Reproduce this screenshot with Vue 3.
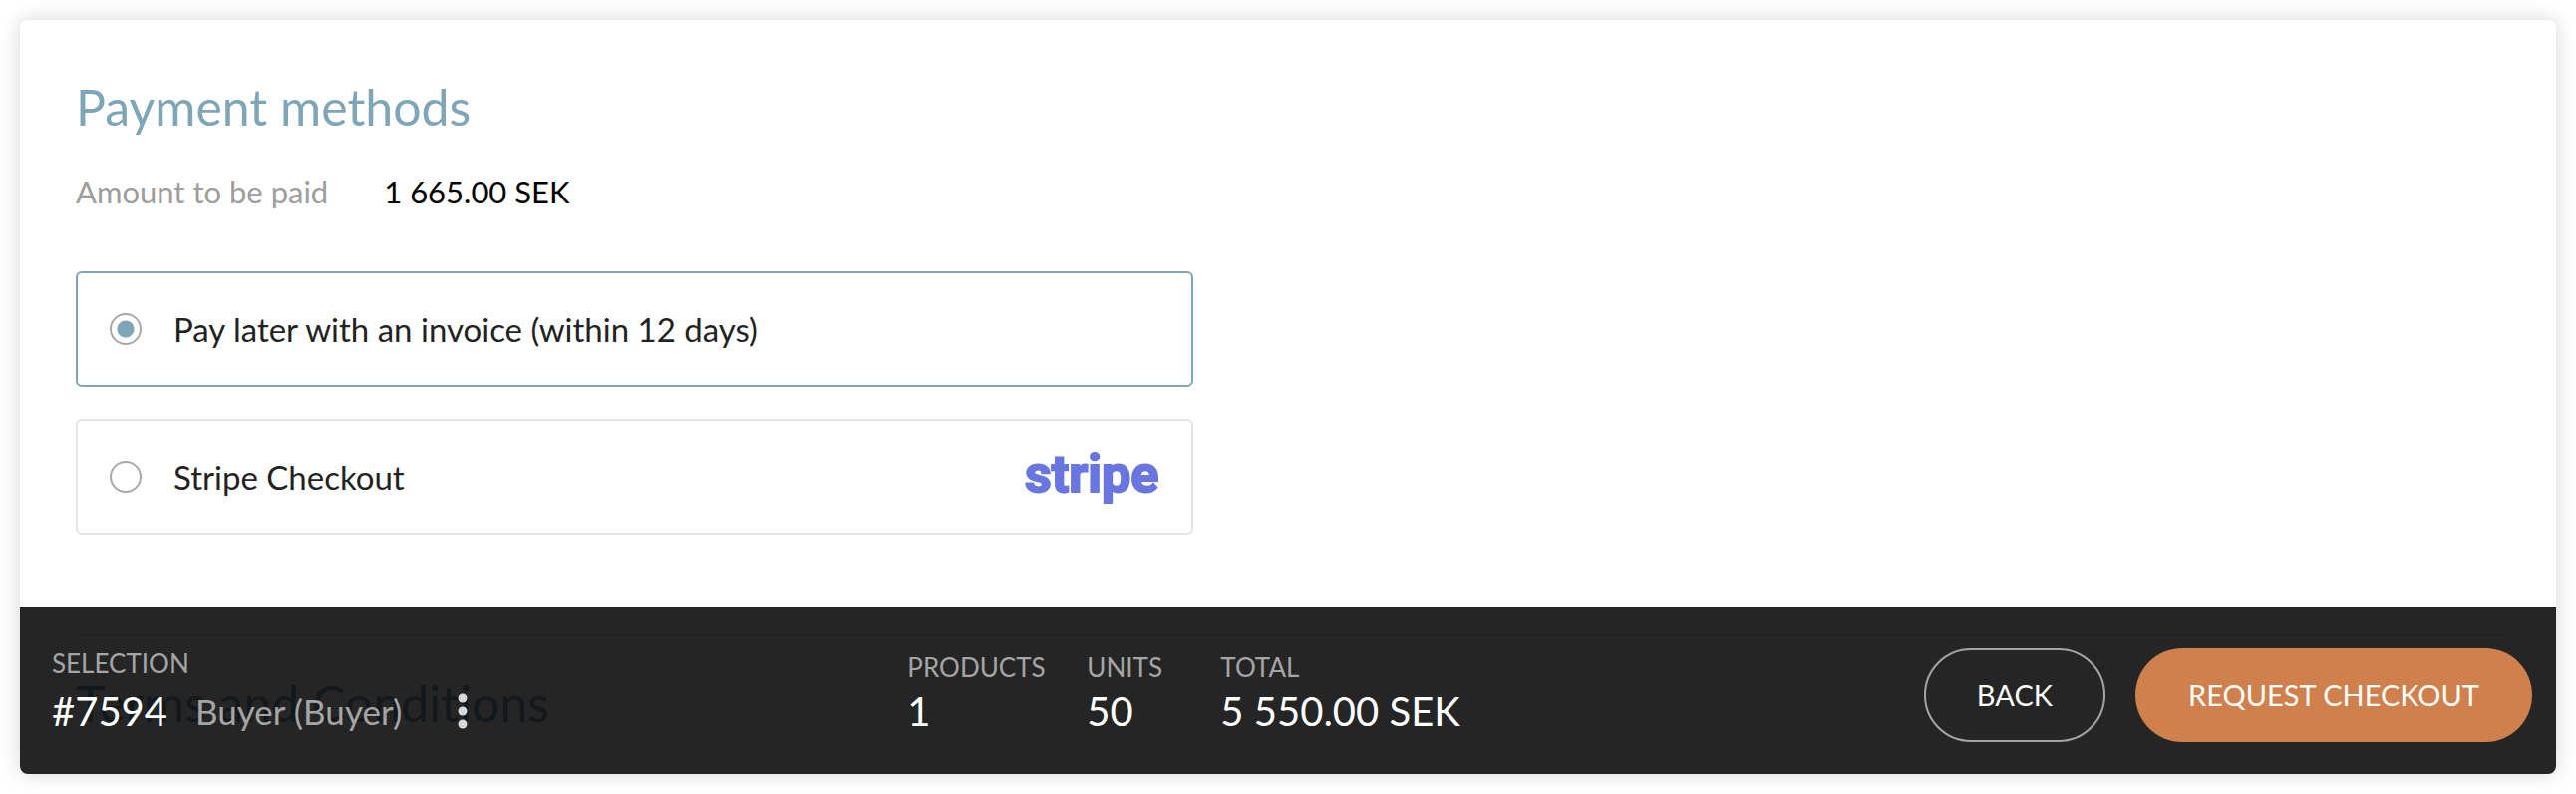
<script setup>
import { ref } from 'vue'

const method = ref('invoice')
const methods = [
  { id: 'invoice', label: 'Pay later with an invoice (within 12 days)' },
  { id: 'stripe', label: 'Stripe Checkout' },
]
const totals = [
  { label: 'Products', value: '1' },
  { label: 'Units', value: '50' },
  { label: 'Total', value: '5 550.00 SEK' },
]
</script>

<template>
  <main class="page">
    <div class="card">
      <section class="payment">
        <h2 class="title">Payment methods</h2>
        <dl class="amount">
          <dt>Amount to be paid</dt>
          <dd>1 665.00 SEK</dd>
        </dl>
        <div class="options" role="radiogroup" aria-label="Payment methods">
          <label
            v-for="m in methods"
            :key="m.id"
            class="option"
            :class="{ selected: method === m.id }"
          >
            <input v-model="method" class="radio" type="radio" name="method" :value="m.id" />
            <span class="option-label">{{ m.label }}</span>
            <svg v-if="m.id === 'stripe'" class="logo" viewBox="0 0 136 68" aria-label="Stripe">
              <text x="1" y="49">stripe</text>
            </svg>
          </label>
        </div>
      </section>
      <section class="terms">
        <h2 class="title">Terms and Conditions</h2>
      </section>

      <footer class="bar">
        <div class="selection">
          <div class="caption">Selection</div>
          <div class="selection-row">
            <span class="value">#7594</span>
            <span class="buyer">Buyer (Buyer)</span>
            <button class="more" type="button" aria-label="More actions">
              <svg viewBox="0 0 10 36">
                <circle cx="5" cy="5" r="4.5" />
                <circle cx="5" cy="18" r="4.5" />
                <circle cx="5" cy="31" r="4.5" />
              </svg>
            </button>
          </div>
        </div>
        <dl class="totals">
          <div v-for="t in totals" :key="t.label" class="total">
            <dt class="caption">{{ t.label }}</dt>
            <dd class="value">{{ t.value }}</dd>
          </div>
        </dl>
        <div class="actions">
          <button class="btn outline" type="button">BACK</button>
          <button class="btn primary" type="button">REQUEST CHECKOUT</button>
        </div>
      </footer>
    </div>
  </main>
</template>

<style>
body {
  margin: 0;
  background: #fff;
}
</style>

<style scoped>
.page {
  box-sizing: border-box;
  min-height: 100vh;
  padding: 20px;
  display: flex;
  font-family: Lato, "Open Sans", sans-serif;
  color: #222;
}
.card {
  position: relative;
  flex: 1;
  border-radius: 8px;
  overflow: hidden;
  background: #fff;
  box-shadow: 0 0 20px rgba(0, 0, 0, 0.16);
}
.payment {
  padding: 60px 56px 100px;
}
.title {
  margin: 0;
  font-size: 50px;
  line-height: 54px;
  font-weight: 400;
  color: #7fa6b6;
}
.amount {
  display: flex;
  gap: 56px;
  margin: 38px 0 60px;
  font-size: 31px;
  line-height: 40px;
}
.amount dt {
  color: #9d9d9d;
}
.amount dd {
  margin: 0;
  color: #000;
}
.options {
  display: grid;
  gap: 32px;
  width: 46.1%;
}
.option {
  box-sizing: border-box;
  min-height: 116px;
  padding: 0 32px;
  display: flex;
  align-items: center;
  gap: 32px;
  border: 2px solid #e5e5e5;
  border-radius: 6px;
  font-size: 33px;
  line-height: 40px;
  cursor: pointer;
}
.option.selected {
  border-color: #7fa6b6;
}
.radio {
  appearance: none;
  flex: none;
  width: 32px;
  height: 32px;
  margin: 0;
  border: 2px solid #a8a8a8;
  border-radius: 50%;
  background: #fff;
}
.radio:checked {
  background: radial-gradient(circle, #7fa6b6 8px, #fff 9px);
}
.option-label {
  flex: 1;
}
.logo {
  width: 136px;
  height: 68px;
  fill: #6a76e0;
  stroke: #6a76e0;
  stroke-width: 2;
  font-family: Roboto, sans-serif;
  font-size: 52px;
  font-weight: 700;
}
.terms {
  margin: 0 50px 0 56px;
  padding: 40px 0 34px;
  border-top: 2px solid #e5e5e5;
}
.bar {
  position: absolute;
  inset: auto 0 0;
  box-sizing: border-box;
  min-height: 167px;
  padding: 8px 24px 0 32px;
  display: flex;
  align-items: center;
  background: rgba(0, 0, 0, 0.855);
  color: #fff;
}
.selection {
  flex: 0 0 34.5%;
  padding-bottom: 4px;
}
.caption {
  font-size: 26px;
  line-height: 32px;
  color: #a5a5a5;
  text-transform: uppercase;
}
.value {
  margin: 0;
  font-size: 40px;
  line-height: 56px;
}
.selection-row {
  display: flex;
  align-items: center;
  gap: 28px;
  margin-top: 4px;
}
.buyer {
  font-size: 35px;
  line-height: 40px;
  color: #a5a5a5;
}
.more {
  padding: 0 28px;
  border: 0;
  background: none;
  display: flex;
  cursor: pointer;
}
.more svg {
  width: 10px;
  height: 36px;
  fill: #d8d8d8;
}
.totals {
  display: grid;
  grid-template-columns: 180px 134px auto;
  margin: 0;
}
.actions {
  margin-left: auto;
  display: flex;
  gap: 30px;
}
.btn {
  box-sizing: border-box;
  min-height: 94px;
  padding: 0 53px;
  border: 0;
  border-radius: 47px;
  font-family: inherit;
  font-size: 29px;
  line-height: 36px;
  color: #fff;
  cursor: pointer;
}
.outline {
  padding: 0 51px;
  border: 2px solid #a5a5a5;
  background: none;
}
.primary {
  background: #d0804c;
}
</style>
